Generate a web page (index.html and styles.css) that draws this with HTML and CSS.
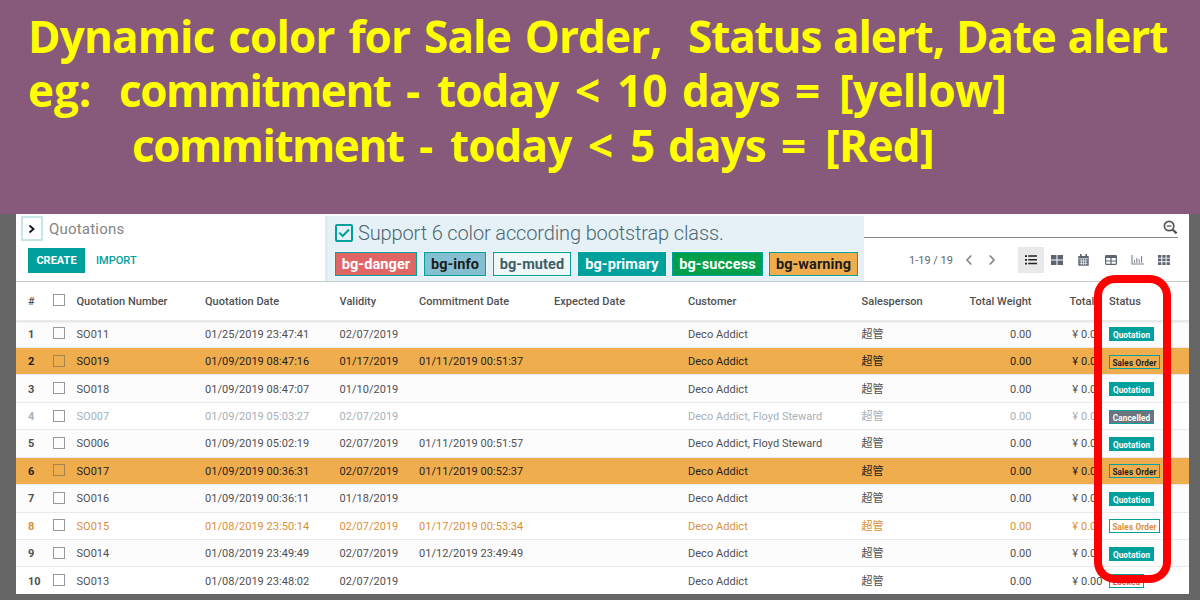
FILE: index.html
```html
<!DOCTYPE html>
<html lang="en">
<head>
<meta charset="utf-8">
<title>Quotations</title>
<link rel="stylesheet" href="styles.css">
</head>
<body>
<header class="banner">
  <p class="line"><span class="seg a">Dynamic color for Sale Order</span><span class="seg comma">,</span><span class="seg b">Status alert, Date alert</span></p>
  <p class="line"><span class="seg c">eg:</span><span class="seg word">commitment</span><span class="seg dash">-</span><span class="seg today">today</span><span class="seg op">&lt;</span><span class="seg ten">10</span><span class="seg days">days</span><span class="seg op">=</span><span class="seg end">[yellow]</span></p>
  <p class="line l3"><span class="seg word">commitment</span><span class="seg dash">-</span><span class="seg today">today</span><span class="seg op">&lt;</span><span class="seg five">5</span><span class="seg days">days</span><span class="seg op">=</span><span class="seg end">[Red]</span></p>
</header>
<main class="panel">
  <section class="control">
    <div class="left">
      <div class="crumb"><span class="toggle"><svg width="8" height="10" viewBox="0 0 8 10"><path d="M1.5 1.5 5.5 5 1.5 8.5" fill="none" stroke="#111" stroke-width="1.8"/></svg></span><span class="title">Quotations</span></div>
      <div class="actions"><span class="create">CREATE</span><span class="import">IMPORT</span></div>
    </div>
    <div class="support">
      <div class="support-title"><svg width="18" height="18" viewBox="0 0 18 18"><rect x="1" y="1" width="16" height="16" rx="1" fill="none" stroke="#00a09d" stroke-width="2"/><path d="M4.3 8.6 7.7 12 14 5.5" fill="none" stroke="#00a09d" stroke-width="2"/></svg><span>Support 6 color according bootstrap class.</span></div>
      <div class="tags">
        <span class="tag danger"><b>bg-danger</b></span><span class="tag info"><b>bg-info</b></span><span class="tag muted"><b>bg-muted</b></span><span class="tag primary"><b>bg-primary</b></span><span class="tag success"><b>bg-success</b></span><span class="tag warning"><b>bg-warning</b></span>
      </div>
    </div>
    <div class="right">
      <div class="search"><svg width="15" height="15" viewBox="0 0 15 15" fill="none" stroke="#555"><circle cx="6.1" cy="6" r="4.7" stroke-width="1.7"/><path d="M9.5 9.5 13.6 13.4" stroke-width="2.4"/><path d="M3.8 6h4.6" stroke-width="1.3"/></svg></div>
      <div class="tools">
        <span class="pager">1-19 / 19</span>
        <svg class="prev" width="8" height="12" viewBox="0 0 8 12"><path d="M6.3 1.5 2 6l4.3 4.5" fill="none" stroke="#7c848b" stroke-width="1.6"/></svg>
        <svg class="next" width="8" height="12" viewBox="0 0 8 12"><path d="M1.7 1.5 6 6l-4.3 4.5" fill="none" stroke="#7c848b" stroke-width="1.6"/></svg>
        <span class="view on"><svg width="12" height="10" viewBox="0 0 12 10" fill="#222"><path d="M0 .3h2v1.8H0zM3.2.3H12v1.5H3.200zM0 4h2v1.800H0zM3.200 4H12v1.500H3.200zM0 7.700h2v1.800H0zM3.200 7.700H12v1.500H3.200z"/></svg></span>
        <span class="view"><svg width="12" height="10" viewBox="0 0 12 10" fill="#5b6470"><path d="M0 0h5.500v4.500H0zM6.500 0H12v4.500H6.500zM0 5.500h5.500V10H0zM6.500 5.500H12V10H6.500z"/></svg></span>
        <span class="view"><svg width="11" height="12" viewBox="0 0 11 12"><path d="M.3 2h10.400v9.700H.3z" fill="#5b6470"/><path d="M2.800 0v3M8.200 0v3" stroke="#5b6470" stroke-width="1.600"/><path d="M1 4.700h9M1.500 7h8M1.500 9.300h8M3.300 5v6M5.500 5v6M7.700 5v6" stroke="#fff" stroke-width=".7"/></svg></span>
        <span class="view"><svg width="12" height="10" viewBox="0 0 12 10"><rect x=".6" y=".6" width="10.800" height="8.800" rx=".8" fill="none" stroke="#5b6470" stroke-width="1.200"/><path d="M1 1h10v2H1z" fill="#5b6470"/><path d="M6 3v6M1 6h10" stroke="#5b6470" stroke-width="1.200"/></svg></span>
        <span class="view"><svg width="13" height="10" viewBox="0 0 13 10"><path d="M1 0v9h12M3.500 7.700V5.200M5.800 7.700V3M8.200 7.700V4.200M10.600 7.700V1" fill="none" stroke="#7b838c" stroke-width="1.100"/></svg></span>
        <span class="view"><svg width="12" height="10" viewBox="0 0 12 10" fill="#5b6470"><path d="M0 0h3.300v2.700H0zM4.300 0h3.300v2.700H4.300zM8.600 0h3.300v2.700H8.600zM0 3.600h3.300v2.700H0zM4.300 3.600h3.300v2.700H4.300zM8.600 3.600h3.300v2.700H8.600zM0 7.200h3.300v2.700H0zM4.300 7.200h3.300v2.700H4.300zM8.600 7.200h3.300v2.700H8.600z"/></svg></span>
      </div>
    </div>
  </section>
  <section class="table">
    <div class="row head"><span class="num">#</span><i class="box"></i><span>Quotation Number</span><span>Quotation Date</span><span>Validity</span><span>Commitment Date</span><span>Expected Date</span><span>Customer</span><span>Salesperson</span><span class="r">Total Weight</span><span class="tot">Total</span><span class="st">Status</span></div>
    <div class="row odd"><span class="num">1</span><i class="box"></i><span>SO011</span><span>01/25/2019 23:47:41</span><span>02/07/2019</span><span></span><span></span><span>Deco Addict</span><span class="cjk">超管</span><span class="r">0.00</span><span class="r">¥ 0.00</span><span class="st"><b class="badge q">Quotation</b></span></div>
    <div class="row warn"><span class="num">2</span><i class="box"></i><span>SO019</span><span>01/09/2019 08:47:16</span><span>01/17/2019</span><span>01/11/2019 00:51:37</span><span></span><span>Deco Addict</span><span class="cjk">超管</span><span class="r">0.00</span><span class="r">¥ 0.00</span><span class="st"><b class="badge s">Sales Order</b></span></div>
    <div class="row odd"><span class="num">3</span><i class="box"></i><span>SO018</span><span>01/09/2019 08:47:07</span><span>01/10/2019</span><span></span><span></span><span>Deco Addict</span><span class="cjk">超管</span><span class="r">0.00</span><span class="r">¥ 0.00</span><span class="st"><b class="badge q">Quotation</b></span></div>
    <div class="row mute"><span class="num">4</span><i class="box"></i><span>SO007</span><span>01/09/2019 05:03:27</span><span>02/07/2019</span><span></span><span></span><span>Deco Addict, Floyd Steward</span><span class="cjk">超管</span><span class="r">0.00</span><span class="r">¥ 0.00</span><span class="st"><b class="badge x">Cancelled</b></span></div>
    <div class="row odd"><span class="num">5</span><i class="box"></i><span>SO006</span><span>01/09/2019 05:02:19</span><span>02/07/2019</span><span>01/11/2019 00:51:57</span><span></span><span>Deco Addict, Floyd Steward</span><span class="cjk">超管</span><span class="r">0.00</span><span class="r">¥ 0.00</span><span class="st"><b class="badge q">Quotation</b></span></div>
    <div class="row warn"><span class="num">6</span><i class="box"></i><span>SO017</span><span>01/09/2019 00:36:31</span><span>02/07/2019</span><span>01/11/2019 00:52:37</span><span></span><span>Deco Addict</span><span class="cjk">超管</span><span class="r">0.00</span><span class="r">¥ 0.00</span><span class="st"><b class="badge s">Sales Order</b></span></div>
    <div class="row odd"><span class="num">7</span><i class="box"></i><span>SO016</span><span>01/09/2019 00:36:11</span><span>01/18/2019</span><span></span><span></span><span>Deco Addict</span><span class="cjk">超管</span><span class="r">0.00</span><span class="r">¥ 0.00</span><span class="st"><b class="badge q">Quotation</b></span></div>
    <div class="row orange"><span class="num">8</span><i class="box"></i><span>SO015</span><span>01/08/2019 23:50:14</span><span>02/07/2019</span><span>01/17/2019 00:53:34</span><span></span><span>Deco Addict</span><span class="cjk">超管</span><span class="r">0.00</span><span class="r">¥ 0.00</span><span class="st"><b class="badge s">Sales Order</b></span></div>
    <div class="row odd"><span class="num">9</span><i class="box"></i><span>SO014</span><span>01/08/2019 23:49:49</span><span>02/07/2019</span><span>01/12/2019 23:49:49</span><span></span><span>Deco Addict</span><span class="cjk">超管</span><span class="r">0.00</span><span class="r">¥ 0.00</span><span class="st"><b class="badge q">Quotation</b></span></div>
    <div class="row"><span class="num">10</span><i class="box"></i><span>SO013</span><span>01/08/2019 23:48:02</span><span>02/07/2019</span><span></span><span></span><span>Deco Addict</span><span class="cjk">超管</span><span class="r">0.00</span><span class="r">¥ 0.00</span><span class="st"><b class="badge k">Locked</b></span></div>
  </section>
  <div class="highlight"></div>
</main>
</body>
</html>
```
FILE: styles.css
```css
* { box-sizing: border-box; }
body { margin: 0; width: 1200px; height: 600px; overflow: hidden; background: #666; font-family: Roboto, "Noto Sans CJK SC", sans-serif; color: #505050; }
.banner { height: 214px; background: #875a7b; padding: 9px 0 0 28px; color: #ff0; font: bold 44px/54.300px "Open Sans", "Noto Sans", sans-serif; }
.line { margin: 0; height: 54.300px; display: flex; white-space: pre; }
.seg { flex: none; letter-spacing: -.9px; }
.a { width: 622px; letter-spacing: -.85px; word-spacing: 3.300px; }
.comma { width: 38px; }
.b { letter-spacing: -1.100px; word-spacing: 1.500px; }
.c { width: 91px; letter-spacing: 0; }
.word { width: 287px; letter-spacing: -1.450px; }
.dash { width: 31px; }
.today { width: 138px; }
.op { width: 42px; }
.ten { width: 65px; letter-spacing: 0; }
.five { width: 38px; }
.days { width: 113px; }
.end { padding-left: 2px; letter-spacing: -.6px; }
.l3 { padding-left: 104px; }
.panel { position: relative; margin-left: 16px; width: 1173px; height: 380px; background: #fff; overflow: hidden; }
.control { display: flex; height: 68px; border-bottom: 1px solid #c4c8c8; }
.left { width: 309px; padding: 2px 0 0 5px; }
.crumb { display: flex; align-items: center; height: 25px; }
.toggle { width: 22px; height: 25px; border: 2px solid #c2e7e6; display: flex; align-items: center; justify-content: center; }
.title { margin-left: 6px; font-size: 15px; letter-spacing: .2px; color: #858585; }
.actions { display: flex; align-items: center; margin: 6.500px 0 0 7px; height: 25px; font-size: 11px; font-weight: 500; }
.create { width: 57px; height: 25px; line-height: 25px; text-align: center; background: #00a09d; color: #fff; font-weight: 700; }
.import { margin-left: 11px; color: #00a09d; }
.support { margin-top: 2px; width: 539px; height: 65px; background: #e5f1f6; border-left: 3px solid #dcebf2; padding-left: 7px; }
.support-title { display: flex; align-items: center; height: 33px; font-size: 20px; font-weight: 300; letter-spacing: -.14px; color: #4d6872; white-space: nowrap; }
.support-title span { margin-left: 5px; }
.tags { display: flex; margin-top: 3px; }
.tag { height: 24px; line-height: 24px; border: 1.500px solid #00a09d; font-size: 14.500px; display: flex; justify-content: center; white-space: nowrap; outline: 1px solid #eef7f9; letter-spacing: .1px; }
.danger { width: 82px; background: #e06666; color: #fff; }
.info { width: 62px; margin-left: 7px; background: #85c0d2; color: #1c1c1c; }
.muted { width: 78px; margin-left: 7px; background: #f0f7fa; color: #3f5f68; }
.primary { width: 88px; margin-left: 7px; background: #00a09d; color: #fff; }
.success { width: 91px; margin-left: 6px; background: #00a04a; color: #fff; }
.warning { width: 89px; margin-left: 6px; background: #f0ad4e; color: #1c1c1c; }
.right { width: 325px; }
.search { height: 24px; width: 314px; border-bottom: 1px solid #888; display: flex; justify-content: flex-end; padding-top: 6px; }
.tools { display: flex; align-items: center; height: 44px; padding-left: 45px; }
.pager { width: 56px; font-size: 11px; color: #666; white-space: nowrap; }
.prev { margin-right: 15px; }
.next { margin-right: 21.500px; }
.view { width: 26.600px; height: 26px; display: flex; align-items: center; justify-content: center; flex: none; }
.on { background: #e9e9e9; }
.row { display: grid; grid-template-columns: 25px 23.500px 128.500px 134.500px 79.500px 135px 134px 173.500px 80px 90px 71px 1fr; align-items: center; padding-left: 12px; height: 27.450px; font-size: 11px; letter-spacing: .03px; white-space: nowrap; border-bottom: 1px solid #eaeaea; background: #fff; }
.row > span { padding-top: 1px; }
.row > .cjk { padding-top: 0; line-height: 14px; margin-top: 2px; }
.odd { background: #fcfcfc; }
.head { height: 38.500px; font-weight: 500; box-shadow: 0 1px 2px #ddd; position: relative; }
.num { font-weight: 700; }
.head .num { font-weight: 500; }
.box { width: 12px; height: 12px; border: 1px solid #999; margin-top: -1px; }
.r { text-align: right; }
.tot { padding-left: 38px; }
.st { padding-left: 6.500px; display: flex; }
.warn { background: #f0ad4e; color: #1f1f1f; }
.warn .box { border-color: #a8844c; }
.mute { color: #a8b0b8; }
.orange { color: #d9903a; }
.badge { height: 14px; line-height: 14px; font-size: 8.200px; border: 1px solid #00a09d; display: flex; justify-content: center; letter-spacing: .12px; }
.q { width: 45px; background: #00a09d; color: #fff; }
.s { width: 51px; }
.x { width: 45px; background: #6c757d; color: #fff; }
.k { width: 35px; color: #d9534f; }
.highlight { position: absolute; left: 1078px; top: 61px; width: 77px; height: 308px; border: 8px solid #f00; border-radius: 21px; }
```
